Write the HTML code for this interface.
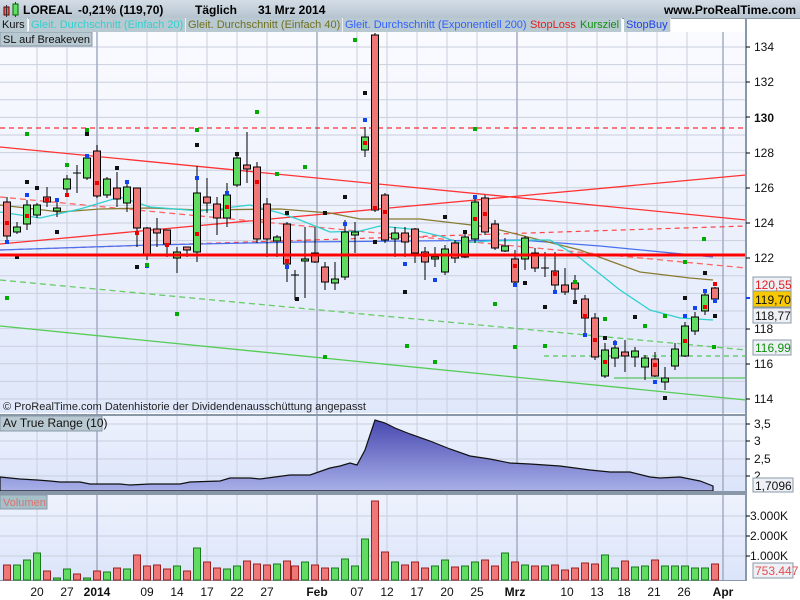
<!DOCTYPE html>
<html><head><meta charset="utf-8"><style>
body{margin:0;width:800px;height:600px;overflow:hidden;background:#fff;font-family:"Liberation Sans",sans-serif}
#hdr{position:absolute;left:0;top:0;width:800px;height:18px;background:linear-gradient(#d4dde6,#b6c4d0);border-bottom:1px solid #8a9aa8}
#hdr b{position:absolute;top:3px;font-size:12px}
.lg{position:absolute;top:18px;height:14px;font-size:11px;line-height:14px;background:#b9c9d1;padding:0 2px;border-right:1px solid #eee}
svg{position:absolute;left:0;top:0}
</style></head><body>
<svg width="800" height="600" xmlns="http://www.w3.org/2000/svg" font-family="Liberation Sans, sans-serif">
<defs>
<linearGradient id="bg" x1="0" y1="0" x2="0" y2="1"><stop offset="0" stop-color="#fafbff"/><stop offset="1" stop-color="#dfe7fa"/></linearGradient>
<linearGradient id="bg2" x1="0" y1="0" x2="0" y2="1"><stop offset="0" stop-color="#eef2fd"/><stop offset="1" stop-color="#dbe4fa"/></linearGradient>
<linearGradient id="atr" x1="0" y1="0" x2="0" y2="1"><stop offset="0" stop-color="#4848b0"/><stop offset="1" stop-color="#a8b0e8"/></linearGradient>
</defs>
<rect x="0" y="32" width="746" height="381" fill="url(#bg)"/>
<rect x="0" y="416" width="746" height="75" fill="url(#bg2)"/>
<rect x="0" y="495" width="746" height="86" fill="url(#bg2)"/>
<rect x="746" y="18" width="54" height="582" fill="#fff"/>
<g stroke="#c9cfdd" stroke-width="1">
<path d="M0 47H746M0 64.6H746M0 82.2H746M0 99.8H746M0 117.4H746M0 135H746M0 152.6H746M0 170.2H746M0 187.8H746M0 205.4H746M0 223H746M0 240.6H746M0 258.2H746M0 275.8H746M0 293.4H746M0 311H746M0 328.6H746M0 346.2H746M0 363.8H746M0 381.4H746M0 399H746"/>
<path d="M0 424H746M0 441H746M0 459H746M0 476H746M0 516H746M0 536H746M0 556H746"/>
<path d="M37 32V581M67 32V581M147 32V581M177 32V581M207 32V581M237 32V581M267 32V581M357 32V581M387 32V581M417 32V581M447 32V581M477 32V581M567 32V581M597 32V581M627 32V581M657 32V581M687 32V581"/>
</g>
<path d="M97 32V581M317 32V581M517 32V581M723 32V581" stroke="#a4acc4" stroke-width="1.5"/>
<g fill="none">
<path d="M0 128H746" stroke="#f00" stroke-dasharray="5,4"/>
<path d="M0 147L746 220" stroke="#f33" stroke-width="1.3"/>
<path d="M0 244L746 175" stroke="#f33" stroke-width="1.3"/>
<path d="M0 197L746 268" stroke="#f66" stroke-width="1.3" stroke-dasharray="6,4"/>
<path d="M0 250L746 226" stroke="#f44" stroke-width="1.2" stroke-dasharray="5,4"/>
<path d="M0 280L746 350" stroke="#6c6" stroke-width="1.3" stroke-dasharray="6,4"/>
<path d="M544 356H746" stroke="#3b3" stroke-dasharray="5,4"/>
<path d="M0 326L746 400" stroke="#5c5" stroke-width="1.3"/>
<path d="M614 378H746" stroke="#3b3"/>
<path d="M0 250L150 245L300 242L520 240L600 246L713 257" stroke="#4a70f0" stroke-width="1.3"/>
<path d="M0 205L60 212L100 209L150 208L200 210L280 209L330 213L360 219L420 219L480 226L500 230L580 250L640 272L690 278L713 280" stroke="#8a7a30" stroke-width="1.3"/>
<path d="M0 212L40 218L80 209L120 197L150 207L200 211L250 205L280 213L300 220L330 232L360 231L380 226L410 229L440 236L460 243L490 241L530 240L550 240L580 258L620 290L650 310L680 318L713 320" stroke="#30d0d0" stroke-width="1.3"/>
</g>
<g stroke="#000" stroke-width="1">
<path d="M7 197V240M17 222V234M27 200V230M37 203V218M47 187V207M57 202V217M67 175V193M77 165V193M73 173H81M87 155V180M97 145V198M107 177V198M117 172V207M127 183V212M137 188V247M147 227V260M157 218V247M167 230V257M177 247V273M187 247V257M197 166V262M207 178V213M217 197V235M227 183V227M237 155V187M247 132V183M257 162V243M267 198V257M277 235V257M287 222V282M295 270V300M291 275H299M305 227V298M315 227V263M325 262V290M335 262V290M345 220V280M355 222V253M365 127V157M375 33V212M385 193V243M395 227V257M405 227V257M415 228V263M425 247V280M435 247V267M445 245V275M455 240V263M465 230V258M475 195V243M485 195V235M495 220V250M505 238V252M515 250V287M525 236V270M535 248V272M545 252V277M541 268H549M555 252V292M565 268V295M575 275V300M585 295V333M595 313V360M605 343V378M615 340V367M625 340V372M635 347V367M645 355V380M655 352V377M665 367V390M675 343V370M685 322V357M695 312V335M705 292V315M715 287V300"/>
</g>
<g stroke="#000" stroke-width="1" fill="#60dc60">
<rect x="13.5" y="227" width="7" height="5"/><rect x="23.5" y="205" width="7" height="19"/><rect x="33.5" y="205" width="7" height="10"/><rect x="53.5" y="208" width="7" height="3"/><rect x="63.5" y="179" width="7" height="10"/><rect x="83.5" y="158" width="7" height="20"/><rect x="103.5" y="179" width="7" height="16"/><rect x="123.5" y="187" width="7" height="16"/><rect x="173.5" y="252" width="7" height="6"/><rect x="193.5" y="193" width="7" height="59"/><rect x="223.5" y="195" width="7" height="23"/><rect x="233.5" y="158" width="7" height="27"/><rect x="273.5" y="237" width="7" height="4"/><rect x="301.5" y="259" width="7" height="2"/><rect x="331.5" y="279" width="7" height="4"/><rect x="341.5" y="232" width="7" height="45"/><rect x="351.5" y="232" width="7" height="3"/><rect x="361.5" y="137" width="7" height="13"/><rect x="391.5" y="233" width="7" height="6"/><rect x="431.5" y="257" width="7" height="2"/><rect x="441.5" y="249" width="7" height="23"/><rect x="461.5" y="237" width="7" height="20"/><rect x="471.5" y="202" width="7" height="37"/><rect x="501.5" y="246" width="7" height="5"/><rect x="521.5" y="238" width="7" height="21"/><rect x="601.5" y="350" width="7" height="26"/><rect x="611.5" y="348" width="7" height="10"/><rect x="631.5" y="351" width="7" height="6"/><rect x="641.5" y="358" width="7" height="9"/><rect x="661.5" y="378" width="7" height="4"/><rect x="671.5" y="349" width="7" height="17"/><rect x="681.5" y="326" width="7" height="30"/><rect x="691.5" y="317" width="7" height="14"/><rect x="701.5" y="295" width="7" height="16"/>
</g>
<g stroke="#000" stroke-width="1" fill="#ee7878">
<rect x="3.5" y="202" width="7" height="34"/><rect x="43.5" y="197" width="7" height="5"/><rect x="93.5" y="151" width="7" height="45"/><rect x="113.5" y="188" width="7" height="11"/><rect x="133.5" y="188" width="7" height="40"/><rect x="143.5" y="228" width="7" height="28"/><rect x="153.5" y="229" width="7" height="4"/><rect x="163.5" y="230" width="7" height="14"/><rect x="183.5" y="247" width="7" height="3"/><rect x="203.5" y="197" width="7" height="6"/><rect x="213.5" y="204" width="7" height="14"/><rect x="243.5" y="165" width="7" height="4"/><rect x="253.5" y="167" width="7" height="72"/><rect x="263.5" y="204" width="7" height="35"/><rect x="283.5" y="224" width="7" height="40"/><rect x="311.5" y="253" width="7" height="9"/><rect x="321.5" y="267" width="7" height="15"/><rect x="371.5" y="35" width="7" height="175"/><rect x="381.5" y="195" width="7" height="45"/><rect x="401.5" y="233" width="7" height="9"/><rect x="411.5" y="229" width="7" height="24"/><rect x="421.5" y="252" width="7" height="10"/><rect x="451.5" y="243" width="7" height="15"/><rect x="481.5" y="198" width="7" height="34"/><rect x="491.5" y="224" width="7" height="24"/><rect x="511.5" y="259" width="7" height="23"/><rect x="531.5" y="253" width="7" height="15"/><rect x="551.5" y="271" width="7" height="14"/><rect x="561.5" y="285" width="7" height="7"/><rect x="571.5" y="283" width="7" height="6"/><rect x="581.5" y="299" width="7" height="19"/><rect x="591.5" y="318" width="7" height="39"/><rect x="621.5" y="352" width="7" height="4"/><rect x="651.5" y="359" width="7" height="17"/><rect x="711.5" y="288" width="7" height="11"/>
</g>
<g fill="#e00">
<rect x="5" y="221" width="4" height="4"/><rect x="25" y="214" width="4" height="4"/><rect x="45" y="198" width="4" height="4"/><rect x="65" y="193" width="4" height="4"/><rect x="95" y="181" width="4" height="4"/><rect x="135" y="231" width="4" height="4"/><rect x="165" y="243" width="4" height="4"/><rect x="195" y="232" width="4" height="4"/><rect x="225" y="205" width="4" height="4"/><rect x="255" y="180" width="4" height="4"/><rect x="285" y="259" width="4" height="4"/><rect x="363" y="141" width="4" height="4"/><rect x="373" y="206" width="4" height="4"/><rect x="383" y="210" width="4" height="4"/><rect x="423" y="253" width="4" height="4"/><rect x="473" y="217" width="4" height="4"/><rect x="483" y="212" width="4" height="4"/><rect x="513" y="264" width="4" height="4"/><rect x="553" y="272" width="4" height="4"/><rect x="583" y="314" width="4" height="4"/><rect x="593" y="338" width="4" height="4"/><rect x="603" y="360" width="4" height="4"/><rect x="653" y="363" width="4" height="4"/><rect x="683" y="339" width="4" height="4"/><rect x="703" y="305" width="4" height="4"/><rect x="713" y="282" width="4" height="4"/>
</g>
<g fill="#1144ee">
<rect x="5" y="240" width="4" height="4"/><rect x="25" y="193" width="4" height="4"/><rect x="55" y="198" width="4" height="4"/><rect x="85" y="154" width="4" height="4"/><rect x="125" y="180" width="4" height="4"/><rect x="145" y="264" width="4" height="4"/><rect x="195" y="176" width="4" height="4"/><rect x="225" y="191" width="4" height="4"/><rect x="285" y="265" width="4" height="4"/><rect x="343" y="222" width="4" height="4"/><rect x="363" y="118" width="4" height="4"/><rect x="403" y="262" width="4" height="4"/><rect x="433" y="278" width="4" height="4"/><rect x="473" y="195" width="4" height="4"/><rect x="513" y="283" width="4" height="4"/><rect x="553" y="290" width="4" height="4"/><rect x="583" y="333" width="4" height="4"/><rect x="613" y="341" width="4" height="4"/><rect x="653" y="380" width="4" height="4"/><rect x="683" y="314" width="4" height="4"/><rect x="693" y="306" width="4" height="4"/><rect x="703" y="289" width="4" height="4"/><rect x="713" y="299" width="4" height="4"/>
</g>
<g fill="#111">
<rect x="15" y="255" width="4" height="4"/><rect x="25" y="180" width="4" height="4"/><rect x="35" y="186" width="4" height="4"/><rect x="55" y="230" width="4" height="4"/><rect x="85" y="132" width="4" height="4"/><rect x="115" y="166" width="4" height="4"/><rect x="135" y="265" width="4" height="4"/><rect x="195" y="143" width="4" height="4"/><rect x="235" y="152" width="4" height="4"/><rect x="285" y="211" width="4" height="4"/><rect x="295" y="297" width="4" height="4"/><rect x="323" y="211" width="4" height="4"/><rect x="343" y="195" width="4" height="4"/><rect x="363" y="91" width="4" height="4"/><rect x="373" y="240" width="4" height="4"/><rect x="403" y="290" width="4" height="4"/><rect x="443" y="215" width="4" height="4"/><rect x="463" y="230" width="4" height="4"/><rect x="523" y="281" width="4" height="4"/><rect x="543" y="305" width="4" height="4"/><rect x="573" y="300" width="4" height="4"/><rect x="603" y="336" width="4" height="4"/><rect x="633" y="315" width="4" height="4"/><rect x="663" y="396" width="4" height="4"/><rect x="683" y="296" width="4" height="4"/><rect x="703" y="271" width="4" height="4"/><rect x="713" y="314" width="4" height="4"/>
</g>
<g fill="#0a0">
<rect x="5" y="296" width="4" height="4"/><rect x="25" y="132" width="4" height="4"/><rect x="65" y="163" width="4" height="4"/><rect x="85" y="128" width="4" height="4"/><rect x="145" y="263" width="4" height="4"/><rect x="175" y="312" width="4" height="4"/><rect x="195" y="128" width="4" height="4"/><rect x="255" y="110" width="4" height="4"/><rect x="275" y="172" width="4" height="4"/><rect x="303" y="165" width="4" height="4"/><rect x="323" y="355" width="4" height="4"/><rect x="353" y="38" width="4" height="4"/><rect x="405" y="344" width="4" height="4"/><rect x="433" y="360" width="4" height="4"/><rect x="473" y="127" width="4" height="4"/><rect x="493" y="302" width="4" height="4"/><rect x="513" y="345" width="4" height="4"/><rect x="543" y="344" width="4" height="4"/><rect x="573" y="280" width="4" height="4"/><rect x="603" y="317" width="4" height="4"/><rect x="643" y="324" width="4" height="4"/><rect x="663" y="314" width="4" height="4"/><rect x="683" y="260" width="4" height="4"/><rect x="702" y="237" width="4" height="4"/><rect x="712" y="345" width="4" height="4"/>
</g>
<path d="M0 255H746" stroke="#f00" stroke-width="3"/>
<path d="M0 477L20 479L37 480L50 481L60 482L80 482L90 484L120 484L130 485L150 484L180 484L190 482L220 481L230 478L250 478L260 479L290 475L310 475L330 468L340 466L350 463L357 465L365 450L375 420L385 423L395 428L410 434L430 441L450 449L470 456L490 459L510 463L530 464L560 466L590 470L610 472L630 472L650 477L660 478L680 477L700 481L713 486L713 491L0 491Z" fill="url(#atr)" stroke="#111" stroke-width="1.2"/>
<rect x="0" y="414" width="746" height="2" fill="#8898a8"/>
<rect x="0" y="491" width="746" height="4" fill="#8898a8"/>
<rect x="0" y="580" width="746" height="1" fill="#8898a8"/>
<rect x="745" y="18" width="2" height="563" fill="#8898a8"/>
<g stroke="#1a7a1a" fill="#60dc60">
<rect x="13.5" y="565" width="7" height="15"/><rect x="23.5" y="560" width="7" height="20"/><rect x="33.5" y="553" width="7" height="27"/><rect x="53.5" y="578" width="7" height="2"/><rect x="63.5" y="569" width="7" height="11"/><rect x="83.5" y="578" width="7" height="2"/><rect x="103.5" y="572" width="7" height="8"/><rect x="123.5" y="569" width="7" height="11"/><rect x="173.5" y="566" width="7" height="14"/><rect x="193.5" y="548" width="7" height="32"/><rect x="223.5" y="569" width="7" height="11"/><rect x="233.5" y="566" width="7" height="14"/><rect x="273.5" y="564" width="7" height="16"/><rect x="301.5" y="562" width="7" height="18"/><rect x="331.5" y="568" width="7" height="12"/><rect x="341.5" y="559" width="7" height="21"/><rect x="351.5" y="566" width="7" height="14"/><rect x="361.5" y="539" width="7" height="41"/><rect x="391.5" y="562" width="7" height="18"/><rect x="431.5" y="566" width="7" height="14"/><rect x="441.5" y="560" width="7" height="20"/><rect x="461.5" y="566" width="7" height="14"/><rect x="471.5" y="562" width="7" height="18"/><rect x="501.5" y="553" width="7" height="27"/><rect x="521.5" y="565" width="7" height="15"/><rect x="541.5" y="566" width="7" height="14"/><rect x="601.5" y="555" width="7" height="25"/><rect x="611.5" y="568" width="7" height="12"/><rect x="631.5" y="567" width="7" height="13"/><rect x="641.5" y="566" width="7" height="14"/><rect x="661.5" y="566" width="7" height="14"/><rect x="671.5" y="566" width="7" height="14"/><rect x="681.5" y="566" width="7" height="14"/><rect x="691.5" y="568" width="7" height="12"/><rect x="701.5" y="568" width="7" height="12"/>
</g>
<g stroke="#a02020" fill="#ee7878">
<rect x="3.5" y="565" width="7" height="15"/><rect x="43.5" y="571" width="7" height="9"/><rect x="73.5" y="574" width="7" height="6"/><rect x="93.5" y="571" width="7" height="9"/><rect x="113.5" y="568" width="7" height="12"/><rect x="133.5" y="555" width="7" height="25"/><rect x="143.5" y="566" width="7" height="14"/><rect x="153.5" y="565" width="7" height="15"/><rect x="163.5" y="569" width="7" height="11"/><rect x="183.5" y="571" width="7" height="9"/><rect x="203.5" y="562" width="7" height="18"/><rect x="213.5" y="568" width="7" height="12"/><rect x="243.5" y="561" width="7" height="19"/><rect x="253.5" y="564" width="7" height="16"/><rect x="263.5" y="565" width="7" height="15"/><rect x="283.5" y="561" width="7" height="19"/><rect x="291.5" y="566" width="7" height="14"/><rect x="311.5" y="565" width="7" height="15"/><rect x="321.5" y="568" width="7" height="12"/><rect x="371.5" y="501" width="7" height="79"/><rect x="381.5" y="552" width="7" height="28"/><rect x="401.5" y="565" width="7" height="15"/><rect x="411.5" y="562" width="7" height="18"/><rect x="421.5" y="568" width="7" height="12"/><rect x="451.5" y="567" width="7" height="13"/><rect x="481.5" y="560" width="7" height="20"/><rect x="491.5" y="566" width="7" height="14"/><rect x="511.5" y="562" width="7" height="18"/><rect x="531.5" y="566" width="7" height="14"/><rect x="551.5" y="565" width="7" height="15"/><rect x="561.5" y="570" width="7" height="10"/><rect x="571.5" y="568" width="7" height="12"/><rect x="581.5" y="563" width="7" height="17"/><rect x="591.5" y="564" width="7" height="16"/><rect x="621.5" y="561" width="7" height="19"/><rect x="651.5" y="560" width="7" height="20"/><rect x="711.5" y="564" width="7" height="16"/>
</g>
<g font-size="12" fill="#111">
<text x="754" y="51">134</text><text x="754" y="86">132</text><text x="754" y="122" font-weight="bold">130</text><text x="754" y="157">128</text><text x="754" y="192">126</text><text x="754" y="227">124</text><text x="754" y="262">122</text><text x="754" y="333">118</text><text x="754" y="368">116</text><text x="754" y="403">114</text>
<text x="754" y="428">3,5</text><text x="754" y="445">3</text><text x="754" y="463">2,5</text><text x="754" y="480">2</text>
<text x="750" y="520">3.000K</text><text x="750" y="540">2.000K</text><text x="750" y="560">1.000K</text>
</g>
<g stroke="#000"><path d="M746 47h4M746 82h4M746 117h4M746 153h4M746 188h4M746 223h4M746 258h4M746 329h4M746 364h4M746 399h4M746 424h4M746 441h4M746 459h4M746 476h4M746 516h4M746 536h4M746 556h4"/></g>
<g font-size="12">
<rect x="753" y="277" width="38" height="15" fill="#eef0f6" stroke="#8898a8"/><text x="755" y="289" fill="#e02020">120,55</text>
<rect x="753" y="291" width="38" height="16" fill="#f8c800" stroke="#8898a8"/><text x="755" y="304" fill="#111">119,70</text>
<rect x="753" y="308" width="38" height="15" fill="#eef0f6" stroke="#8898a8"/><text x="755" y="320" fill="#111">118,77</text>
<rect x="753" y="340" width="38" height="15" fill="#eef0f6" stroke="#8898a8"/><text x="755" y="352" fill="#109010">116,99</text>
<rect x="753" y="478" width="40" height="14" fill="#eef0f6" stroke="#8898a8"/><text x="755" y="490" fill="#111">1,7096</text>
<rect x="753" y="563" width="40" height="15" fill="#eef0f6" stroke="#8898a8"/><text x="755" y="575" fill="#e05050">753.447</text>
</g>
<rect x="746" y="297" width="4" height="2" fill="#1144ee"/>
<g font-size="12" fill="#111" text-anchor="middle">
<text x="37" y="596">20</text><text x="67" y="596">27</text><text x="97" y="596" font-weight="bold">2014</text><text x="147" y="596">09</text><text x="177" y="596">14</text><text x="207" y="596">17</text><text x="237" y="596">22</text><text x="267" y="596">27</text><text x="317" y="596" font-weight="bold">Feb</text><text x="357" y="596">07</text><text x="387" y="596">12</text><text x="417" y="596">17</text><text x="447" y="596">20</text><text x="477" y="596">25</text><text x="515" y="596" font-weight="bold">Mrz</text><text x="567" y="596">10</text><text x="597" y="596">13</text><text x="624" y="596">18</text><text x="654" y="596">21</text><text x="684" y="596">26</text><text x="723" y="596" font-weight="bold">Apr</text>
</g>
<text x="3" y="410" font-size="11" fill="#222">© ProRealTime.com  Datenhistorie der Dividendenausschüttung angepasst</text>
<rect x="0" y="416" width="102" height="15" fill="#b9c9d1" stroke="#8898a8"/><text x="3" y="427" font-size="12" fill="#111">Av True Range (10)</text>
<rect x="0" y="495" width="47" height="14" fill="#a6c0c8" stroke="#8898a8"/><text x="3" y="506" font-size="11" fill="#e07070">Volumen</text>
<rect x="0" y="32" width="92" height="14" fill="#b9c9d1" stroke="#8898a8"/><text x="3" y="43" font-size="11" fill="#111">SL auf Breakeven</text>
</svg>
<div id="hdr">
<svg width="18" height="18" style="left:3px;top:1px"><rect x="1" y="6" width="5" height="8" fill="#f06060" stroke="#600"/><path d="M3.5 4V16M12.5 1V16" stroke="#333"/><rect x="10" y="3" width="5" height="11" fill="#60e060" stroke="#060"/></svg>
<b style="left:23px">LOREAL</b><b style="left:78px">-0,21% (119,70)</b><b style="left:195px">Täglich</b><b style="left:258px">31 Mrz 2014</b>
<b style="right:4px">www.ProRealTime.com</b>
</div>
<div class="lg" style="left:0;color:#111">Kurs</div>
<div class="lg" style="left:29px;color:#30d0d0">Gleit. Durchschnitt (Einfach 20)</div>
<div class="lg" style="left:186px;color:#707020">Gleit. Durchschnitt (Einfach 40)</div>
<div class="lg" style="left:343px;color:#3060ff">Gleit. Durchschnitt (Exponentiell 200)</div>
<div class="lg" style="left:528px;color:#e02020">StopLoss</div>
<div class="lg" style="left:578px;color:#109010">Kursziel</div>
<div class="lg" style="left:624px;color:#2040f0">StopBuy</div>
</body></html>
